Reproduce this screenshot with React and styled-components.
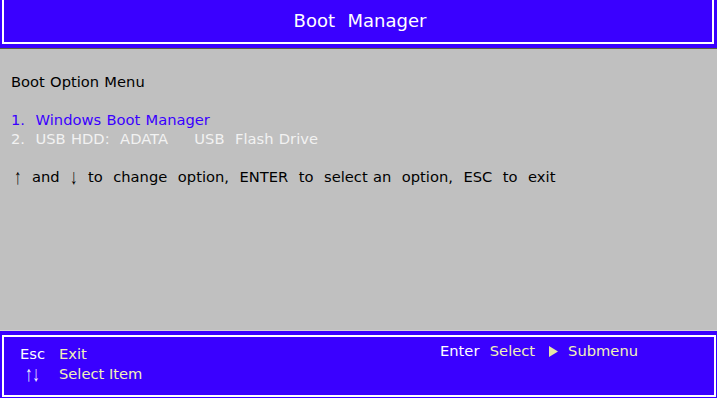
import React from 'react';
import styled, { createGlobalStyle } from 'styled-components';

const BLUE = '#3a00ff';

const GlobalStyle = createGlobalStyle`
  html, body {
    margin: 0;
    padding: 0;
    background: #c0c0c0;
  }
  body {
    font-family: "DejaVu Sans", Verdana, sans-serif;
  }
`;

const Screen = styled.div`
  width: 717px;
  height: 398px;
  display: flex;
  flex-direction: column;
  background: #c0c0c0;
  overflow: hidden;
`;

const Header = styled.header`
  background: ${BLUE};
  padding: 0 3px 4px 2px;
  border-bottom: 1px solid #5c5c3e;
`;

const HeaderFrame = styled.div`
  border: 2px solid #fff;
  border-top: none;
  height: 42px;
  display: flex;
  align-items: center;
  justify-content: center;
`;

const Title = styled.h1`
  margin: 0 0 0 4px;
  font-size: 18px;
  font-weight: normal;
  color: #fff;
  white-space: pre;
  line-height: 42px;
  word-spacing: 0.5px;
`;

const Main = styled.main`
  flex: 1;
  padding: 23px 11px 0;
  font-size: 14.7px;
  line-height: 19px;
  white-space: pre;
  word-spacing: 0.6px;
`;

const Line = styled.div`
  height: 19px;
  color: ${(p) => p.$color || '#000'};
  padding-left: ${(p) => p.$indent || 0}px;
`;

const Arrow = styled.span`
  display: inline-block;
  font-family: "Liberation Sans", Arial, sans-serif;
  transform: scaleY(1.45);
`;

const Footer = styled.footer`
  background: ${BLUE};
  border-top: 1px solid #d6d6d6;
  padding: 4px 1px 1px 2px;
`;

const FooterFrame = styled.div`
  border: 2px solid #fff;
  height: 58px;
  display: grid;
  grid-template-columns: 420px 1fr;
  padding-left: 16px;
  font-size: 14.7px;
  line-height: 20px;
  white-space: pre;
`;

const HelpColumn = styled.div`
  padding-top: ${(p) => p.$top}px;
`;

const HelpRow = styled.div`
  display: flex;
  align-items: center;
  height: 20px;
`;

const Key = styled.span`
  color: #fff;
  width: ${(p) => (p.$width ? `${p.$width}px` : 'auto')};
  padding-left: ${(p) => p.$indent || 0}px;
  box-sizing: border-box;
`;

const Action = styled.span`
  color: #f2f2b8;
  margin-left: ${(p) => p.$shift || 0}px;
`;

const Pointer = styled.svg`
  margin: 0 10px 0 14px;
  display: block;
`;

function App() {
  return (
    <Screen>
      <GlobalStyle />
      <Header>
        <HeaderFrame>
          <Title>Boot  Manager</Title>
        </HeaderFrame>
      </Header>
      <Main>
        <Line>Boot Option Menu</Line>
        <Line />
        <Line $color={BLUE}>1.  Windows Boot Manager</Line>
        <Line $color="#f2f2f2">2.  USB HDD:  ADATA     USB  Flash Drive</Line>
        <Line />
        <Line $indent={3}>
          <Arrow>↑</Arrow>  and  <Arrow>↓</Arrow>  to  change  option,  ENTER  to  select an  option,  ESC  to  exit
        </Line>
      </Main>
      <Footer>
        <FooterFrame>
          <HelpColumn $top={7}>
            <HelpRow>
              <Key $width={39}>Esc</Key>
              <Action>Exit</Action>
            </HelpRow>
            <HelpRow>
              <Key $width={39} $indent={5}>
                <Arrow>↑↓</Arrow>
              </Key>
              <Action>Select Item</Action>
            </HelpRow>
          </HelpColumn>
          <HelpColumn $top={4}>
            <HelpRow>
              <Key>Enter  </Key>
              <Action $shift={1}>Select</Action>
              <Pointer width="9" height="11" viewBox="0 0 9 11">
                <path d="M0 0 L9 5.5 L0 11 Z" fill="#e6e6a6" />
              </Pointer>
              <Action>Submenu</Action>
            </HelpRow>
          </HelpColumn>
        </FooterFrame>
      </Footer>
    </Screen>
  );
}

export default App;
